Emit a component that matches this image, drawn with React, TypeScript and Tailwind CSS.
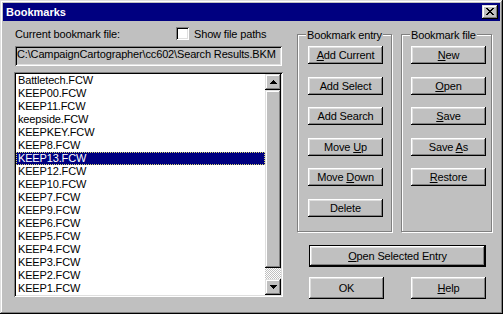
import React from "react";

const files = [
  "Battletech.FCW",
  "KEEP00.FCW",
  "KEEP11.FCW",
  "keepside.FCW",
  "KEEPKEY.FCW",
  "KEEP8.FCW",
  "KEEP13.FCW",
  "KEEP12.FCW",
  "KEEP10.FCW",
  "KEEP7.FCW",
  "KEEP9.FCW",
  "KEEP6.FCW",
  "KEEP5.FCW",
  "KEEP4.FCW",
  "KEEP3.FCW",
  "KEEP2.FCW",
  "KEEP1.FCW",
];

const raised =
  "bg-[#c0c0c0] shadow-[inset_-1px_-1px_0_#000,inset_1px_1px_0_#fff,inset_-2px_-2px_0_#808080,inset_2px_2px_0_#dfdfdf]";
const scrollRaised =
  "bg-[#c0c0c0] shadow-[inset_-1px_-1px_0_#000,inset_1px_1px_0_#dfdfdf,inset_-2px_-2px_0_#808080,inset_2px_2px_0_#fff]";
const sunken =
  "shadow-[inset_1px_1px_0_#808080,inset_-1px_-1px_0_#fff,inset_2px_2px_0_#000,inset_-2px_-2px_0_#dfdfdf]";
const etched =
  "border border-[#808080] shadow-[1px_1px_0_#fff,inset_1px_1px_0_#fff]";

function Label({ text, u }: { text: string; u?: number }) {
  if (u === undefined) return <span className="whitespace-pre">{text}</span>;
  return (
    <span className="whitespace-pre">
      {text.slice(0, u)}
      <span className="underline underline-offset-[1px]">{text[u]}</span>
      {text.slice(u + 1)}
    </span>
  );
}

function Btn({ text, u, className = "" }: { text: string; u?: number; className?: string }) {
  return (
    <div className={`flex w-[75px] h-[18px] items-center justify-center ${raised} ${className}`}>
      <Label text={text} u={u} />
    </div>
  );
}

function Arrow({ down }: { down?: boolean }) {
  const rows = [1, 3, 5, 7];
  return (
    <svg width="7" height="4" viewBox="0 0 7 4" shapeRendering="crispEdges">
      {rows.map((w, i) => (
        <rect key={i} x={(7 - w) / 2} y={down ? 3 - i : i} width={w} height="1" fill="#000" />
      ))}
    </svg>
  );
}

function CloseGlyph() {
  const px: [number, number][] = [
    [0, 0], [1, 0], [6, 0], [7, 0],
    [1, 1], [2, 1], [5, 1], [6, 1],
    [2, 2], [3, 2], [4, 2], [5, 2],
    [3, 3], [4, 3],
    [2, 4], [3, 4], [4, 4], [5, 4],
    [1, 5], [2, 5], [5, 5], [6, 5],
    [0, 6], [1, 6], [6, 6], [7, 6],
  ];
  return (
    <svg width="8" height="7" viewBox="0 0 8 7" shapeRendering="crispEdges">
      {px.map(([x, y], i) => (
        <rect key={i} x={x} y={y} width="1" height="1" fill="#000" />
      ))}
    </svg>
  );
}

function GroupBox({ title, className = "", children }: { title: string; className?: string; children: React.ReactNode }) {
  return (
    <div className={`relative h-[198px] ${etched} ${className}`}>
      <span className="absolute left-[8px] top-[-6px] bg-[#c0c0c0] px-[1px] whitespace-nowrap">{title}</span>
      {children}
    </div>
  );
}

export default function App() {
  return (
    <div className="w-[503px] h-[314px] overflow-hidden bg-[#c0c0c0] p-[3px] shadow-[inset_-1px_-1px_0_#000,inset_1px_1px_0_#dfdfdf,inset_-2px_-2px_0_#808080,inset_2px_2px_0_#fff] font-['Liberation_Sans',Arial,sans-serif] text-[11px] leading-[13px] tracking-[-0.15px] text-black">
      {/* title bar */}
      <div className="flex h-[18px] items-center justify-between bg-[#000080] pl-[3px] pr-[2px]">
        <span className="font-bold tracking-normal text-white">Bookmarks</span>
        <div className={`flex w-[16px] h-[14px] items-center justify-center pb-[1px] ${scrollRaised}`}>
          <CloseGlyph />
        </div>
      </div>

      <div className="flex">
        {/* left column */}
        <div className="ml-[11px] flex w-[269px] flex-col">
          <div className="mt-[6px] flex h-[13px]">
            <span className="mt-[1px] w-[162px] pl-[1px]">Current bookmark file:</span>
            <div className={`w-[13px] h-[13px] bg-white ${sunken}`} />
            <span className="mt-[1px] ml-[5px]">Show file paths</span>
          </div>
          <div className={`mt-[6px] ml-[1px] h-[20px] w-[267px] p-[2px] whitespace-nowrap ${sunken}`}>
            C:\CampaignCartographer\cc602\Search Results.BKM
          </div>
          <div className={`mt-[6px] flex h-[225px] bg-white p-[2px] ${sunken}`}>
            <div className="flex-1">
              {files.map((f, i) => (
                <div
                  key={f}
                  className={
                    i === 6
                      ? "h-[13px] bg-[#000080] pl-[2px] text-white outline-1 outline-dotted outline-[#d8d870] -outline-offset-1"
                      : "h-[13px] pl-[2px]"
                  }
                >
                  {f}
                </div>
              ))}
            </div>
            <div className="flex w-[16px] flex-col">
              <div className={`flex h-[16px] items-center justify-center ${scrollRaised}`}>
                <Arrow />
              </div>
              <div className={`h-[178px] ${scrollRaised}`} />
              <div className="h-[11px] bg-[repeating-conic-gradient(#c0c0c0_0_25%,#fff_0_50%)] bg-size-[2px_2px]" />
              <div className={`flex h-[16px] items-center justify-center ${scrollRaised}`}>
                <Arrow down />
              </div>
            </div>
          </div>
        </div>

        {/* right column */}
        <div className="ml-[14px] flex flex-col">
          <div className="mt-[13px] flex gap-[9px]">
            <GroupBox title="Bookmark entry" className="w-[95px] pl-[10px] pt-[11px]">
              <Btn text="Add Current" u={0} />
              <Btn text="Add Select" className="mt-[13px]" />
              <Btn text="Add Search" className="mt-[12px]" />
              <Btn text="Move Up" u={5} className="mt-[13px]" />
              <Btn text="Move Down" u={5} className="mt-[12px]" />
              <Btn text="Delete" className="mt-[13px]" />
            </GroupBox>
            <GroupBox title="Bookmark file" className="w-[91px] pl-[9px] pt-[11px]">
              <Btn text="New" u={0} />
              <Btn text="Open" u={0} className="mt-[13px]" />
              <Btn text="Save" u={0} className="mt-[12px]" />
              <Btn text="Save As" u={5} className="mt-[13px]" />
              <Btn text="Restore" u={0} className="mt-[12px]" />
            </GroupBox>
          </div>
          <div className="ml-[12px] mt-[13px] h-[22px] w-[177px] border border-black">
            <div className={`flex h-full items-center justify-center ${raised}`}>
              <Label text="Open Selected Entry" u={0} />
            </div>
          </div>
          <div className="ml-[12px] mt-[10px] flex gap-[27px]">
            <Btn text="OK" className="h-[22px]" />
            <Btn text="Help" u={0} className="h-[22px]" />
          </div>
        </div>
      </div>
    </div>
  );
}
